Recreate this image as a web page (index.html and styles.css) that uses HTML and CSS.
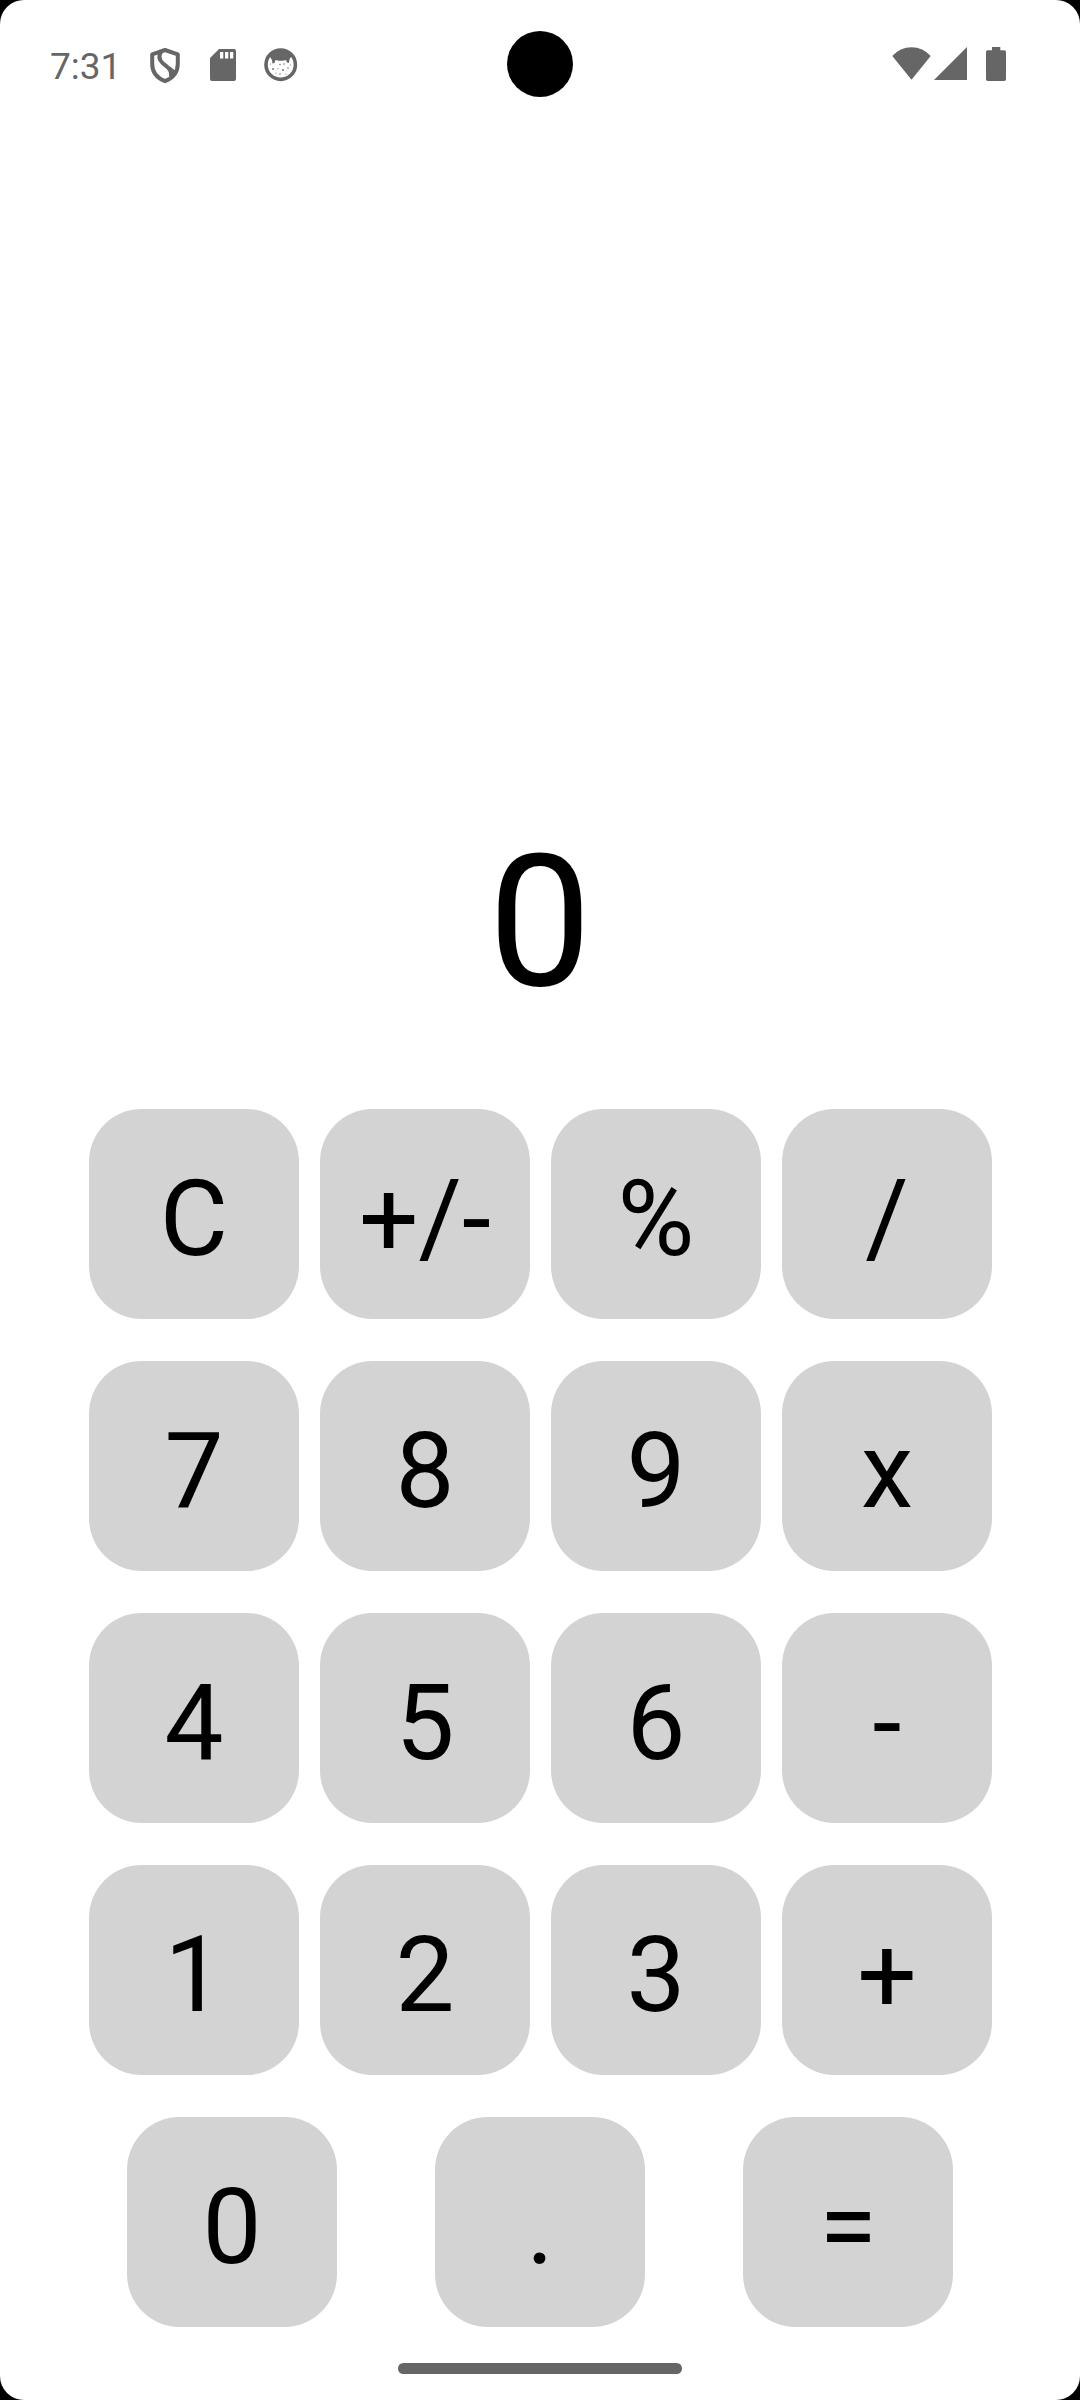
FILE: index.html
```html
<!DOCTYPE html>
<html lang="en">
<head>
<meta charset="utf-8">
<title>Calculator</title>
<link rel="stylesheet" href="styles.css">
</head>
<body>
<div class="screen">
  <header class="status-bar">
    <div class="status-left">
      <span class="clock">7:31</span>
      <svg class="icon-shield" width="30" height="36" viewBox="0 0 30 36"><path d="M15 2 27.800 6.300V16c0 8-5 14-12.800 17.200C7 30 2.200 24 2.200 16V6.300Z" fill="none" stroke="#666" stroke-width="4" stroke-linejoin="round"/><path d="M11.500 3C8 8 9 12 13 15.500c5 4 9 6 8 13" fill="none" stroke="#666" stroke-width="4"/><path d="M20 19c4 4 3 8 0 11l5-7Z" fill="#666" stroke="#666"/></svg>
      <svg class="icon-sd" width="26" height="32" viewBox="0 0 26 32"><path fill-rule="evenodd" d="M9 0H24Q26 0 26 2V30Q26 32 24 32H2Q0 32 0 30V9ZM10 3v6.500h3.300V3ZM15 3v6.500h3.300V3ZM20 3v6.500h3.300V3Z" fill="#666"/></svg>
      <svg class="icon-face" width="34" height="34" viewBox="0 0 34 34"><circle cx="16.700" cy="16.700" r="14.700" fill="none" stroke="#666" stroke-width="3.600"/><path d="M5.500 8C8 3 13 2 17 2s9 1 11 6l-2.500 3-.5 4-2-.5-1-2.500-3 .8h-4.500l-3-.8-1 3-2 .5L8 12Z" fill="#666"/><g fill="#777"><circle cx="16" cy="16.500" r=".8"/><circle cx="20" cy="16" r=".8"/><circle cx="9" cy="21" r="1"/><circle cx="14" cy="20.500" r=".6"/><circle cx="19" cy="22" r="1"/><circle cx="24" cy="20" r=".8"/><circle cx="12" cy="25" r=".6"/><circle cx="16" cy="26" r=".8"/><circle cx="22" cy="26" r=".6"/><circle cx="6.500" cy="16" r=".6"/><circle cx="26.500" cy="17" r=".6"/></g></svg>
    </div>
    <div class="camera"></div>
    <div class="status-right">
      <svg class="icon-wifi" width="39" height="33" viewBox="0 0 39 33"><path d="M.3 9Q8 .2 19.500 .2T38.700 9L19.500 32.700Z" fill="#666"/></svg>
      <svg class="icon-signal" width="33" height="33" viewBox="0 0 33 33"><path d="M33 0V33H0Z" fill="#666"/></svg>
      <svg class="icon-battery" width="20" height="34" viewBox="0 0 20 34"><path d="M6 0H14.300V3.300H18.300Q20 3.300 20 5V32.300Q20 34 18.300 34H1.700Q0 34 0 32.300V5Q0 3.300 1.700 3.300H6Z" fill="#666"/></svg>
    </div>
  </header>
  <main class="calculator">
    <output class="display">0</output>
    <div class="row"><button class="key">C</button><button class="key">+/-</button><button class="key">%</button><button class="key">/</button></div>
    <div class="row"><button class="key">7</button><button class="key">8</button><button class="key">9</button><button class="key">x</button></div>
    <div class="row"><button class="key">4</button><button class="key">5</button><button class="key">6</button><button class="key">-</button></div>
    <div class="row"><button class="key">1</button><button class="key">2</button><button class="key">3</button><button class="key">+</button></div>
    <div class="row row-last"><button class="key">0</button><button class="key">.</button><button class="key">=</button></div>
  </main>
  <div class="home-handle"></div>
</div>
</body>
</html>
```
FILE: styles.css
```css
body { margin: 0; background: #000; font-family: Roboto, sans-serif; }
.screen { box-sizing: border-box; width: 1080px; height: 2400px; background: #fff; border-radius: 24px; overflow: hidden; display: flex; flex-direction: column; }
.status-bar { height: 128px; display: grid; grid-template-columns: 1fr 66px 1fr; align-items: start; }
.status-left { display: flex; align-items: flex-start; padding: 44px 0 0 50px; color: #666; }
.clock { font-size: 37px; line-height: 46px; width: 100px; }
.icon-shield { margin-top: 4px; }
.icon-sd { margin: 5px 0 0 30px; }
.icon-face { margin: 4px 0 0 28px; }
.camera { width: 66px; height: 66px; margin-top: 31px; border-radius: 50%; background: #000; }
.status-right { display: flex; align-items: flex-start; justify-content: flex-end; padding: 47px 74px 0 0; }
.icon-signal { margin-left: 3px; }
.icon-battery { margin-left: 19px; }
.calculator { display: flex; flex-direction: column; gap: 42px; padding: 0 88px 0 89px; }
.display { height: 939px; box-sizing: border-box; padding: 684px 0 0; margin: 0 -88px 0 -89px; text-align: center; font-size: 184px; line-height: 220px; }
.row { display: flex; justify-content: space-between; }
.row-last { padding: 0 39px 0 38px; }
.key { width: 210px; height: 210px; padding: 12px 0 0; border: 0; border-radius: 52.5px; background: #d3d3d3; color: #000; font: 105px/124px Roboto, sans-serif; }
.home-handle { width: 284px; height: 10.5px; border-radius: 5.25px; background: #666; margin: 36.25px auto 0; }
```
